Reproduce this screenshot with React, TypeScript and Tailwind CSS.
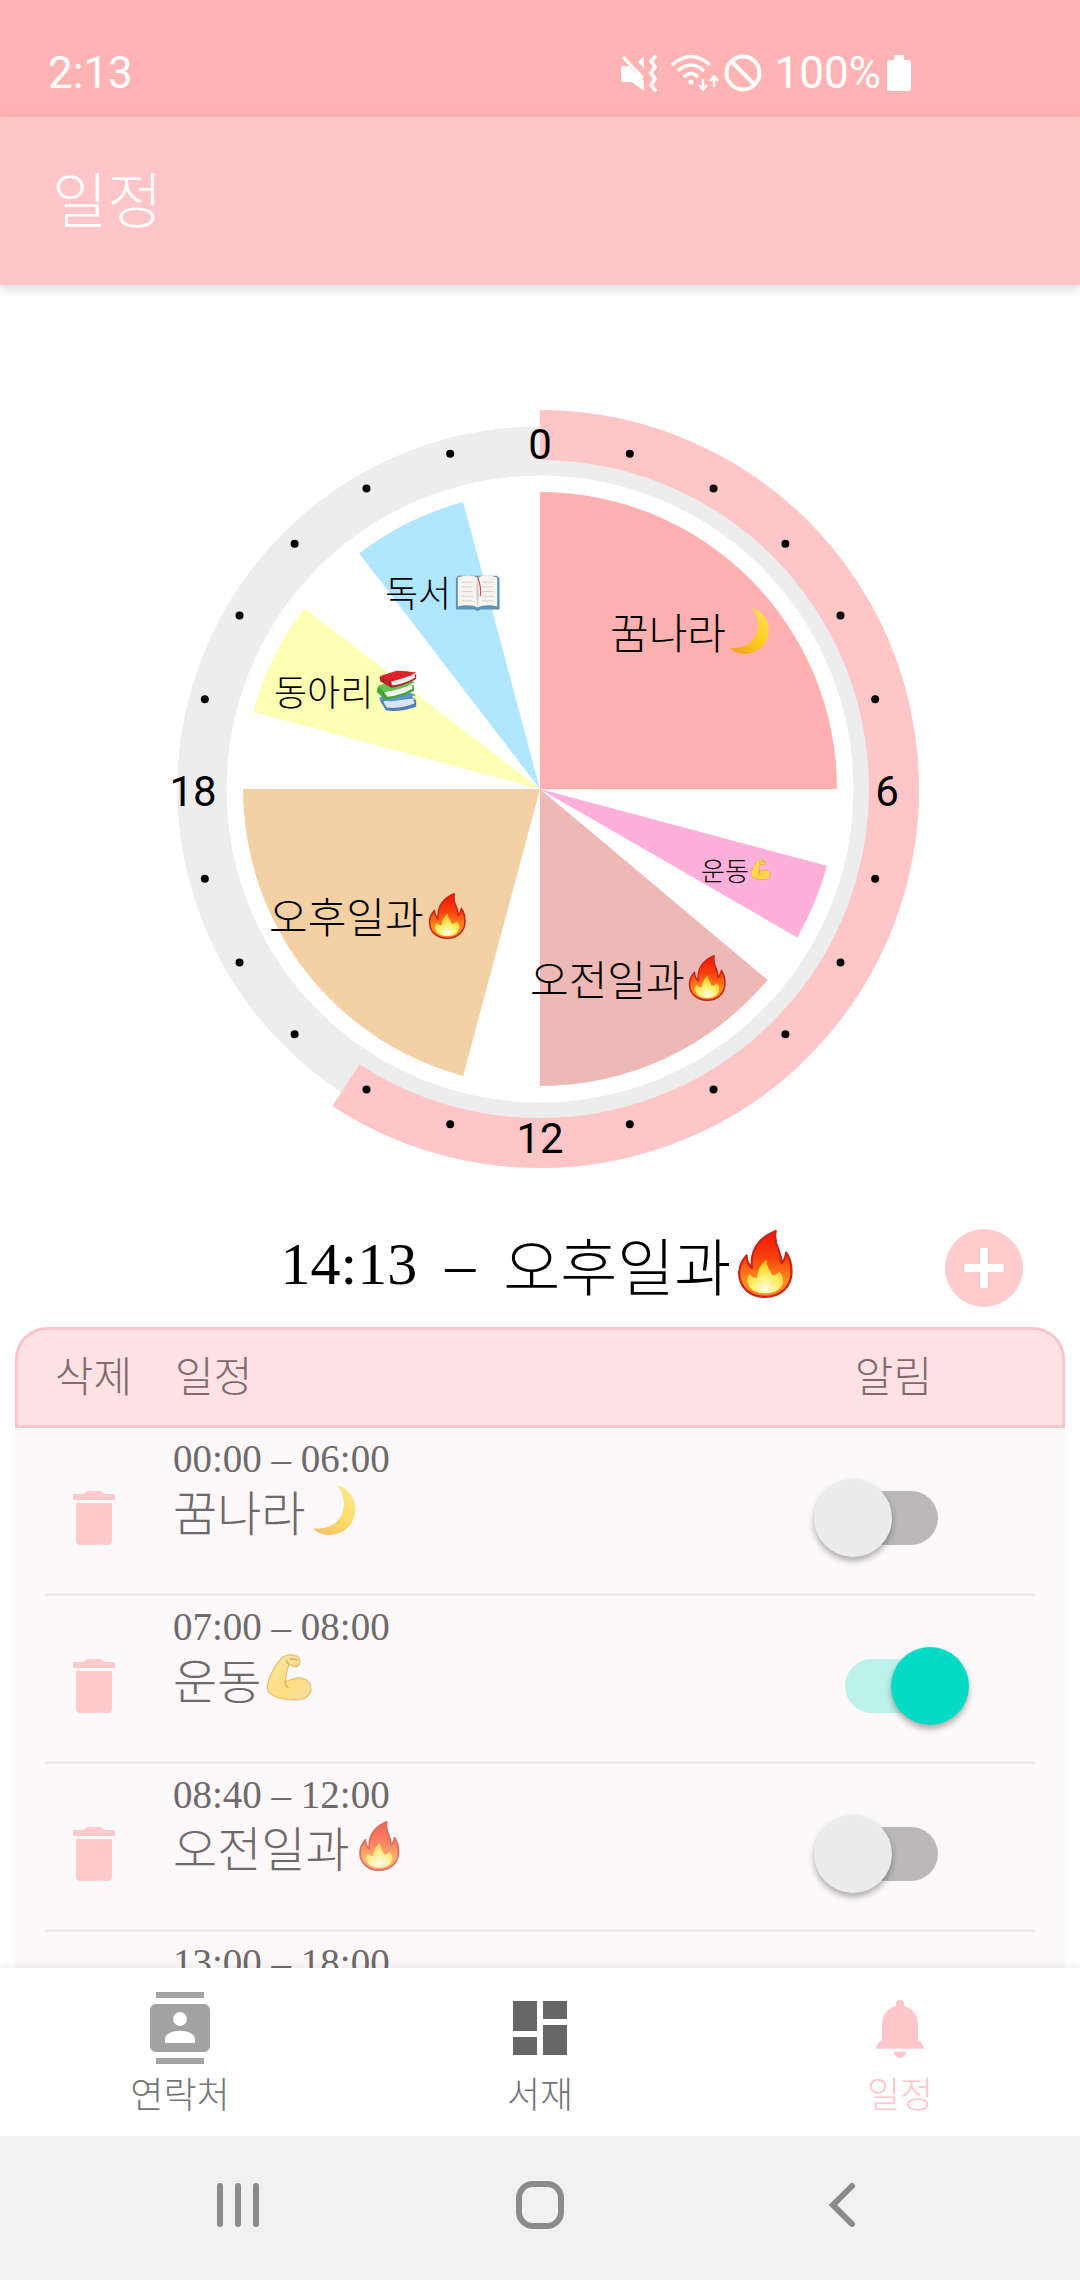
import { useId, useState } from "react";
import type { ReactNode } from "react";

type EmojiName = "fire" | "moon" | "arm" | "books" | "book";

const EMOJI_LABEL: Record<EmojiName, string> = {
  fire: "불꽃",
  moon: "달",
  arm: "근육",
  books: "책 더미",
  book: "펼친 책",
};

function EmojiArt({ name, id }: { name: EmojiName; id: string }): ReactNode {
  switch (name) {
    case "fire":
      return (
        <>
          <defs>
            <linearGradient id={id + "a"} x1="0" y1="0" x2="0" y2="1">
              <stop offset="0" stopColor="#f01508" />
              <stop offset="0.4" stopColor="#f9400c" />
              <stop offset="0.75" stopColor="#ff8d1e" />
              <stop offset="1" stopColor="#f9822b" />
            </linearGradient>
            <radialGradient id={id + "b"} cx="0.5" cy="0.85" r="0.75">
              <stop offset="0" stopColor="#fffbe6" />
              <stop offset="0.5" stopColor="#ffee66" />
              <stop offset="1" stopColor="#ffc81c" />
            </radialGradient>
          </defs>
          <path
            d="M31.500 .8C30.600 6 31.500 10 33.500 14C34.800 17 35.600 20 35.600 23.500C37.800 21 38.800 18.500 39 16C41.800 20 42.800 25 42.700 30C42.500 40 35 47.200 24 47.200C13 47.200 5.800 40 5.800 30.500C5.800 25.500 7.800 21.500 11 18C11 21.500 12 24.500 14.800 27C14 20 16 13 20 8.500C23 5 27.500 2.500 31.500 .8Z"
            fill={`url(#${id}a)`}
            stroke="#cc2418"
            strokeWidth="1.6"
            strokeLinejoin="round"
          />
          <path
            d="M25 21C24.800 25 27 27 29 32C31.500 32 33 31 34 29.500C37 32.500 37.500 36 36 39C34 43 29.500 44.800 24 44.800C18 44.800 13.500 42.500 12 38C11 35 12 32.500 13 31C14.500 33 16.500 34 18.500 33.500C18.500 29 21 24 25 21Z"
            fill={`url(#${id}b)`}
          />
        </>
      );
    case "moon":
      return (
        <>
          <defs>
            <linearGradient id={id + "a"} x1="1" y1="0" x2="0.2" y2="1">
              <stop offset="0" stopColor="#ffe45c" />
              <stop offset="0.55" stopColor="#fdce1d" />
              <stop offset="1" stopColor="#f2a31a" />
            </linearGradient>
          </defs>
          <path
            d="M27 0C38 3 45 13 44.500 24C44 38 33 48 19 48C13 48 7.500 45.500 4 41.500C16 43.500 27 38 31.500 28C35.500 18 33 8 27 0Z"
            fill={`url(#${id}a)`}
          />
        </>
      );
    case "arm":
      return (
        <>
          <defs>
            <linearGradient id={id + "a"} x1="0" y1="0" x2="1" y2="1">
              <stop offset="0" stopColor="#fbe07a" />
              <stop offset="0.6" stopColor="#fccf3f" />
              <stop offset="1" stopColor="#f8d77a" />
            </linearGradient>
          </defs>
          <path
            d="M17 4C21 1 29 1 32 4C35 8 33 13 29 13C26 13 25 11 23 11C21 16 20 21 19.500 27C24 27 26 24 32 24C40 24 45 29 44 36C42.500 43 36 45 27 45C18 45 10 43 5 39C1 36 2 30 4 25C7 17 11 9 17 4Z"
            fill={`url(#${id}a)`}
            stroke="#dfa232"
            strokeWidth="1.2"
          />
          <path
            d="M19.500 27C19 30 20 32 22 33M24 5.500L31 6.500M23 11C21.500 10 20.500 8.500 21 7"
            fill="none"
            stroke="#c98a25"
            strokeWidth="1.4"
            strokeLinecap="round"
          />
        </>
      );
    case "books":
      return (
        <>
          <path d="M5 34L12 46C22 48 34 46 46 42L46 35L40 30Z" fill="#4f7fb3" />
          <path d="M9 36L13 43C24 44.500 34 42 44 38.500L43 33Z" fill="#d9e6f2" />
          <path d="M4 33L10 35C22 38 36 33 46 29L38 26L8 30Z" fill="#5e93cc" />
          <path d="M3 20L2 26L12 34C24 33 36 28 44 24L43 18Z" fill="#43a53a" />
          <path d="M10 26L14 31C25 30 34 26 42 22L41 18Z" fill="#f3f3ee" />
          <path d="M3 19L10 25C22 25 34 20 44 15L38 11L12 16Z" fill="#63c353" />
          <path d="M5 9L6 14L18 21C28 20 38 16 46 11L46 6Z" fill="#b3252a" />
          <path d="M18 13L19 18C28 18 37 14 45 9.500L44 6Z" fill="#f1ecec" />
          <path d="M5 8L24 2C32 2 39 3 46 4C38 8 28 12 18 14Z" fill="#dc2226" />
        </>
      );
    case "book":
      return (
        <>
          <path d="M1 9L3 6H45L47.500 9V42H27L24 44L21 42H1Z" fill="#5b93b8" />
          <path d="M3 8C10 5 19 5 24 8C29 5 38 5 45 8V39C38 37 29 37 24 40C19 37 10 37 3 39Z" fill="#f7f3ee" />
          <path d="M24 8C22 18 22 30 24 40C26 30 26 18 24 8Z" fill="#d8d0c8" />
          <path
            d="M7 13H19M7 18H19M7 23H19M7 28H19M7 33H19M29 13H41M29 18H41M29 23H41M29 28H41M29 33H41"
            stroke="#d6d0ca"
            strokeWidth="1"
          />
          <path d="M24 7C27 15 28 22 27 28" fill="none" stroke="#c1515a" strokeWidth="1.2" />
        </>
      );
  }
}

type EmojiProps = {
  name: EmojiName;
  className?: string;
  x?: number;
  y?: number;
  size?: number;
};

function Emoji({ name, className, x, y, size }: EmojiProps) {
  const id = useId().replace(/[^a-zA-Z0-9]/g, "");
  return (
    <svg
      viewBox="0 0 48 48"
      role="img"
      aria-label={EMOJI_LABEL[name]}
      className={className}
      x={x}
      y={y}
      width={size}
      height={size}
    >
      <EmojiArt name={name} id={id} />
    </svg>
  );
}

const C = 390;

function point(hour: number, radius: number): string {
  const a = (hour / 24) * Math.PI * 2;
  return `${(C + Math.sin(a) * radius).toFixed(2)} ${(C - Math.cos(a) * radius).toFixed(2)}`;
}

function wedge(from: number, to: number, radius: number): string {
  const large = to - from > 12 ? 1 : 0;
  return `M${C} ${C}L${point(from, radius)}A${radius} ${radius} 0 ${large} 1 ${point(to, radius)}Z`;
}

function arc(from: number, to: number, radius: number): string {
  const large = to - from > 12 ? 1 : 0;
  return `M${point(from, radius)}A${radius} ${radius} 0 ${large} 1 ${point(to, radius)}`;
}

type Slice = {
  name: string;
  emoji: EmojiName;
  from: number;
  to: number;
  fill: string;
  x: number;
  y: number;
  font: string;
  ex: number;
  ey: number;
  size: number;
};

const SLICES: Slice[] = [
  { name: "꿈나라", emoji: "moon", from: 0, to: 6, fill: "#ffb0b0", x: 460, y: 250, font: "text-[42px]", ex: 576, ey: 209, size: 46 },
  { name: "운동", emoji: "arm", from: 7, to: 8, fill: "#ffb0da", x: 551, y: 482, font: "text-[26px]", ex: 600, ey: 460, size: 22 },
  { name: "오전일과", emoji: "fire", from: 8 + 2 / 3, to: 12, fill: "#eeb8b5", x: 380, y: 597, font: "text-[42px]", ex: 534, ey: 556, size: 46 },
  { name: "오후일과", emoji: "fire", from: 13, to: 18, fill: "#f3d1a5", x: 119, y: 534, font: "text-[42px]", ex: 274, ey: 494, size: 46 },
  { name: "동아리", emoji: "books", from: 19, to: 20.5, fill: "#fdffb3", x: 124, y: 307, font: "text-[36px]", ex: 225, ey: 270, size: 43 },
  { name: "독서", emoji: "book", from: 21.5, to: 23, fill: "#b0e6ff", x: 235, y: 208, font: "text-[36px]", ex: 305, ey: 171, size: 45 },
];

const DOTS = Array.from({ length: 24 }, (_, h) => h).filter((h) => h % 6 !== 0);

const HOURS = [
  { text: "0", x: 390, y: 60 },
  { text: "6", x: 737, y: 407 },
  { text: "12", x: 390, y: 754 },
  { text: "18", x: 43, y: 407 },
];

function DayChart() {
  return (
    <svg viewBox="0 0 780 780" className="mx-auto block w-[780px] max-w-full" role="img" aria-label="하루 일정표">
      <circle cx={C} cy={C} r="338" fill="none" stroke="#ededed" strokeWidth="49" />
      <path d={arc(0, 14 + 13 / 60, 354)} fill="none" stroke="#ffc6c8" strokeWidth="50" />
      {SLICES.map((s) => (
        <path key={s.name} d={wedge(s.from, s.to, 297)} fill={s.fill} />
      ))}
      {DOTS.map((h) => {
        const [cx, cy] = point(h, 347).split(" ");
        return <circle key={h} cx={cx} cy={cy} r="4" fill="#000" />;
      })}
      {HOURS.map((h) => (
        <text key={h.text} x={h.x} y={h.y} textAnchor="middle" className="font-['Roboto',sans-serif] text-[42px] font-normal">
          {h.text}
        </text>
      ))}
      {SLICES.map((s) => (
        <g key={s.name}>
          <text x={s.x} y={s.y} className={s.font}>
            {s.name}
          </text>
          <Emoji name={s.emoji} x={s.ex} y={s.ey} size={s.size} />
        </g>
      ))}
    </svg>
  );
}

function StatusBar() {
  return (
    <div className="flex h-[117px] shrink-0 items-center justify-between bg-[#ffb4b3] pt-[29px] pr-[169px] pl-12 font-['Roboto',sans-serif] text-[44px] font-normal text-white">
      <span>2:13</span>
      <div className="flex items-center">
        <svg viewBox="0 0 37 38" className="h-[38px] w-[37px]" fill="#fff" aria-hidden="true">
          <path d="M2 12H8L23 27V37L11 28H2Q0 28 0 26V14Q0 12 2 12Z" />
          <path d="M17 8L23 2V14Z" />
          <path d="M2 3L22 24" stroke="#fff" strokeWidth="3" />
          <path d="M35 2l-5 5 4 6-4 6 4 6-4 6 5 6" fill="none" stroke="#fff" strokeWidth="3.500" strokeLinejoin="round" />
        </svg>
        <svg viewBox="0 0 48 38" className="ml-[13px] h-[38px] w-12" fill="none" stroke="#fff" strokeWidth="3.500" aria-hidden="true">
          <path d="M1 11Q20-6 39 11" />
          <path d="M7 17Q20 5 33 17" />
          <path d="M13 23Q20 16 27 23" />
          <circle cx="20" cy="28" r="2.500" fill="#fff" stroke="none" />
          <path d="M32 25V35M28 31L32 35.500L36 31" strokeWidth="2.500" />
          <path d="M43 33V23M39 27L43 22.500L47 27" strokeWidth="2.500" />
        </svg>
        <svg viewBox="0 0 40 40" className="ml-1 h-10 w-10" fill="none" stroke="#fff" strokeWidth="4" aria-hidden="true">
          <circle cx="20" cy="20" r="16.500" />
          <path d="M8 8L32 32" />
        </svg>
        <span className="ml-3">100%</span>
        <svg viewBox="0 0 24 36" className="ml-[6px] h-9 w-6" fill="#fff" aria-hidden="true">
          <path d="M7 0h10v5h5q2 0 2 2v27q0 2-2 2H2q-2 0-2-2V7q0-2 2-2h5Z" />
        </svg>
      </div>
    </div>
  );
}

type Row = { time: string; name: string; emoji: EmojiName; on: boolean };

const ROWS: Row[] = [
  { time: "00:00 – 06:00", name: "꿈나라", emoji: "moon", on: false },
  { time: "07:00 – 08:00", name: "운동", emoji: "arm", on: true },
  { time: "08:40 – 12:00", name: "오전일과", emoji: "fire", on: false },
  { time: "13:00 – 18:00", name: "오후일과", emoji: "fire", on: false },
];

function Toggle({ label, initial }: { label: string; initial: boolean }) {
  const [on, setOn] = useState(initial);
  return (
    <label className="relative flex h-[78px] w-[155px] items-center justify-center">
      <input
        type="checkbox"
        role="switch"
        aria-label={label}
        checked={on}
        onChange={(e) => setOn(e.target.checked)}
        className="peer sr-only"
      />
      <span className="h-[54px] w-[93px] rounded-full bg-[#bcb7b8] peer-checked:bg-[#bdf1eb]" />
      <span className="absolute top-0 left-0 size-[78px] rounded-full bg-[#ececec] shadow-[0_4px_6px_rgba(0,0,0,0.3)] peer-checked:right-0 peer-checked:left-auto peer-checked:bg-[#05dac5]" />
    </label>
  );
}

function ScheduleTable() {
  return (
    <table className="w-full table-fixed border-separate border-spacing-0 text-[#6e696a]">
      <colgroup>
        <col className="w-[158px]" />
        <col />
        <col className="w-[348px]" />
      </colgroup>
      <thead className="text-[42px] text-[#806a6c]">
        <tr className="h-[101px]">
          <th className="rounded-tl-[32px] border-y-3 border-l-3 border-[#f9c6cb] bg-[#ffe2e4] p-0 pr-1 pb-2 font-light">삭제</th>
          <th className="border-y-3 border-[#f9c6cb] bg-[#ffe2e4] p-0 pb-2 pl-[2px] text-left font-light">일정</th>
          <th className="rounded-tr-[32px] border-y-3 border-r-3 border-[#f9c6cb] bg-[#ffe2e4] p-0 pb-2 pl-2 font-light">알림</th>
        </tr>
      </thead>
      <tbody className="bg-[#fdf8f9]">
        {ROWS.map((r) => (
          <tr key={r.time}>
            <td className="p-0 pl-[30px]">
              <div className="flex h-[168px] items-center justify-center border-b-3 border-[#f0ebec] pt-[15px] pr-[30px]">
                <button type="button" aria-label={r.name + " 삭제"}>
                  <svg viewBox="0 0 24 24" className="size-[72px]" fill="#ffcacc" aria-hidden="true">
                    <path d="M6 19.500c0 .9.600 1.500 1.500 1.500h9c.9 0 1.500-.6 1.500-1.500V7H6v12.500zM19 4h-3.500q-.6-1-1.600-1h-3.800q-1 0-1.600 1H5v2h14V4z" />
                  </svg>
                </button>
              </div>
            </td>
            <td className="p-0">
              <div className="h-[168px] border-b-3 border-[#f0ebec] pt-2">
                <div className="font-['Liberation_Serif','Noto_Sans_CJK_KR',serif] text-[39px] leading-[46px]">{r.time}</div>
                <div className="flex items-center gap-1 text-[48px] leading-[56px]">
                  {r.name}
                  <Emoji name={r.emoji} className="size-[50px] opacity-65" />
                </div>
              </div>
            </td>
            <td className="p-0 pr-[30px]">
              <div className="flex h-[168px] items-center justify-center border-b-3 border-[#f0ebec] pt-[15px] pl-[30px]">
                <Toggle label={r.name + " 알림"} initial={r.on} />
              </div>
            </td>
          </tr>
        ))}
      </tbody>
    </table>
  );
}

const TABS = [
  {
    label: "연락처",
    tone: "text-[#a2a2a2]",
    text: "text-[#757575]",
    icon: (
      <path d="M20 0H4v2h16V0zM4 24h16v-2H4v2zM20 4H4c-1.100 0-2 .9-2 2v12c0 1.100.9 2 2 2h16c1.100 0 2-.9 2-2V6c0-1.100-.9-2-2-2zm-8 2.700a2.300 2.300 0 1 1 0 4.600 2.300 2.300 0 0 1 0-4.600zM17 17H7v-1.200c0-2 2.600-2.900 5-2.900s5 .9 5 2.900V17z" />
    ),
  },
  {
    label: "서재",
    tone: "text-[#666666]",
    text: "text-[#757575]",
    icon: <path d="M3 13h8V3H3v10zm0 8h8v-6H3v6zm10 0h8V11h-8v10zm0-18v6h8V3h-8z" />,
  },
  {
    label: "일정",
    tone: "text-[#ffc7ca]",
    text: "text-[#ffc7ca]",
    icon: (
      <path d="M6 16v-5.500c0-2.900 1.900-5 4.600-5.800V4a1.400 1.400 0 0 1 2.800 0v.7c2.700.8 4.600 2.900 4.600 5.800V16c1 .5 1.800 1.500 2 2.900H4c.2-1.400 1-2.400 2-2.900zM10 19.900h4c-.2 1.300-1 2.100-2 2.100s-1.800-.8-2-2.100z" />
    ),
  },
];

function TabBar() {
  return (
    <nav className="grid h-[168px] shrink-0 grid-cols-3 bg-white shadow-[0_-3px_8px_rgba(0,0,0,0.06)]">
      {TABS.map((t) => (
        <button key={t.label} type="button" className="flex flex-col items-center pt-6">
          <svg viewBox="0 0 24 24" className={"size-[72px] " + t.tone} fill="currentColor" aria-hidden="true">
            {t.icon}
          </svg>
          <span className={"text-[36px] leading-[56px] " + t.text}>{t.label}</span>
        </button>
      ))}
    </nav>
  );
}

function SystemBar() {
  return (
    <div className="grid h-[144px] shrink-0 grid-cols-3 bg-[#f1f1f1] px-[87px] pb-[6px]">
      <button type="button" aria-label="최근 앱" className="flex items-center justify-center">
        <svg viewBox="0 0 48 48" className="size-12" stroke="#8b8b8b" strokeWidth="6" strokeLinecap="round">
          <path d="M6 5V43M24 5V43M42 5V43" />
        </svg>
      </button>
      <button type="button" aria-label="홈" className="flex items-center justify-center">
        <svg viewBox="0 0 48 48" className="size-12" fill="none" stroke="#8b8b8b" strokeWidth="6">
          <rect x="3" y="3" width="42" height="42" rx="14" />
        </svg>
      </button>
      <button type="button" aria-label="뒤로" className="flex items-center justify-center">
        <svg viewBox="0 0 48 48" className="size-12" fill="none" stroke="#8b8b8b" strokeWidth="6" strokeLinecap="round">
          <path d="M34 5L15 24L34 43" />
        </svg>
      </button>
    </div>
  );
}

export default function App() {
  return (
    <div className="flex h-screen flex-col bg-white font-['Noto_Sans_CJK_KR',sans-serif] font-light text-black">
      <StatusBar />
      <header className="z-10 flex h-[168px] shrink-0 items-center bg-[#ffc5c8] pb-2 pl-[52px] shadow-[0_4px_10px_rgba(0,0,0,0.15)]">
        <h1 className="text-[60px] text-white">일정</h1>
      </header>
      <main className="flex min-h-0 flex-1 flex-col">
        <div className="shrink-0 pt-[114px]">
          <DayChart />
        </div>
        <div className="grid h-[148px] shrink-0 grid-cols-[1fr_auto_1fr] items-center pt-[30px] pr-[57px] pl-[57px]">
          <p className="col-start-2 flex items-center gap-7 pb-2 text-[60px] leading-[72px]">
            <span className="font-['Liberation_Serif',serif]">14:13</span>
            <span className="font-['Liberation_Serif',serif]">–</span>
            <span className="flex items-center text-[62px]">
              오후일과
              <Emoji name="fire" className="size-[68px]" />
            </span>
          </p>
          <button
            type="button"
            aria-label="일정 추가"
            className="flex size-[78px] items-center justify-center justify-self-end rounded-full bg-[#ffcbcd]"
          >
            <svg viewBox="0 0 40 40" className="size-10" stroke="#fff" strokeWidth="8" aria-hidden="true">
              <path d="M20 0V40M0 20H40" />
            </svg>
          </button>
        </div>
        <div className="min-h-0 flex-1 overflow-y-auto px-[15px] [scrollbar-width:none]">
          <ScheduleTable />
        </div>
      </main>
      <TabBar />
      <SystemBar />
    </div>
  );
}
